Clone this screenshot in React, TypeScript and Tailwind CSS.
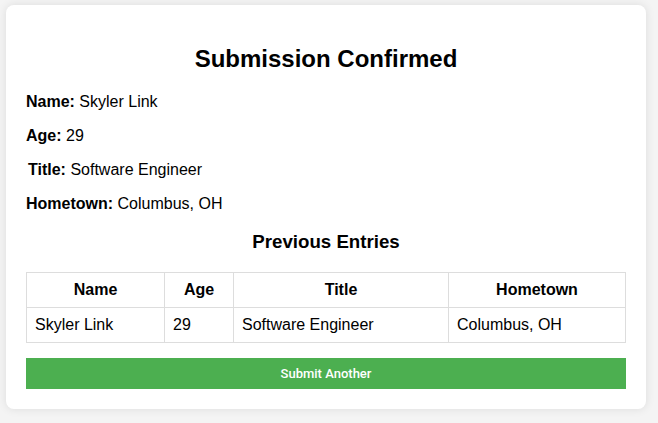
import React from "react";

const entries = [
  { name: "Skyler Link", age: 29, title: "Software Engineer", hometown: "Columbus, OH" },
];

const App = () => {
  const latest = entries[entries.length - 1];

  return (
    <div className="min-h-[423px] bg-[#f4f4f4] pt-[5px] pl-[6px] font-['Liberation_Sans',Arial,sans-serif] text-black">
      {/* Confirmation card */}
      <div className="w-[640px] rounded-lg bg-white px-5 pt-[20px] pb-5 shadow-[0_0_10px_rgba(0,0,0,0.1)]">
        <h2 className="mt-[20px] mb-[20px] text-center text-[24px] font-bold leading-[28px]">Submission Confirmed</h2>

        <div className="flex flex-col gap-4 text-[16px] leading-[18px]">
          <p>
            <strong>Name:</strong> {latest.name}
          </p>
          <p>
            <strong>Age:</strong> {latest.age}
          </p>
          <p className="pl-[2px]">
            <strong>Title:</strong> {latest.title}
          </p>
          <p>
            <strong>Hometown:</strong> {latest.hometown}
          </p>
        </div>

        <h3 className="mt-[18px] mb-[19px] text-center text-[18.7px] font-bold leading-[22px]">Previous Entries</h3>

        {/* Entries table */}
        <table className="w-full border-collapse text-[16px] leading-[18px]">
          <thead>
            <tr>
              <th className="w-[138px] border border-[#dddddd] py-[8px] text-center font-bold">Name</th>
              <th className="w-[69px] border border-[#dddddd] py-[8px] text-center font-bold">Age</th>
              <th className="w-[215px] border border-[#dddddd] py-[8px] text-center font-bold">Title</th>
              <th className="border border-[#dddddd] py-[8px] text-center font-bold">Hometown</th>
            </tr>
          </thead>
          <tbody>
            {entries.map((e) => (
              <tr key={e.name}>
                <td className="border border-[#dddddd] px-[8px] py-[8px]">{e.name}</td>
                <td className="border border-[#dddddd] px-[8px] py-[8px]">{e.age}</td>
                <td className="border border-[#dddddd] px-[8px] py-[8px]">{e.title}</td>
                <td className="border border-[#dddddd] px-[8px] py-[8px]">{e.hometown}</td>
              </tr>
            ))}
          </tbody>
        </table>

        <button className="mt-[15px] h-[31px] w-full bg-[#4caf50] font-['Roboto',sans-serif] text-[13px] font-medium text-white">
          Submit Another
        </button>
      </div>
    </div>
  );
};

export default App;
